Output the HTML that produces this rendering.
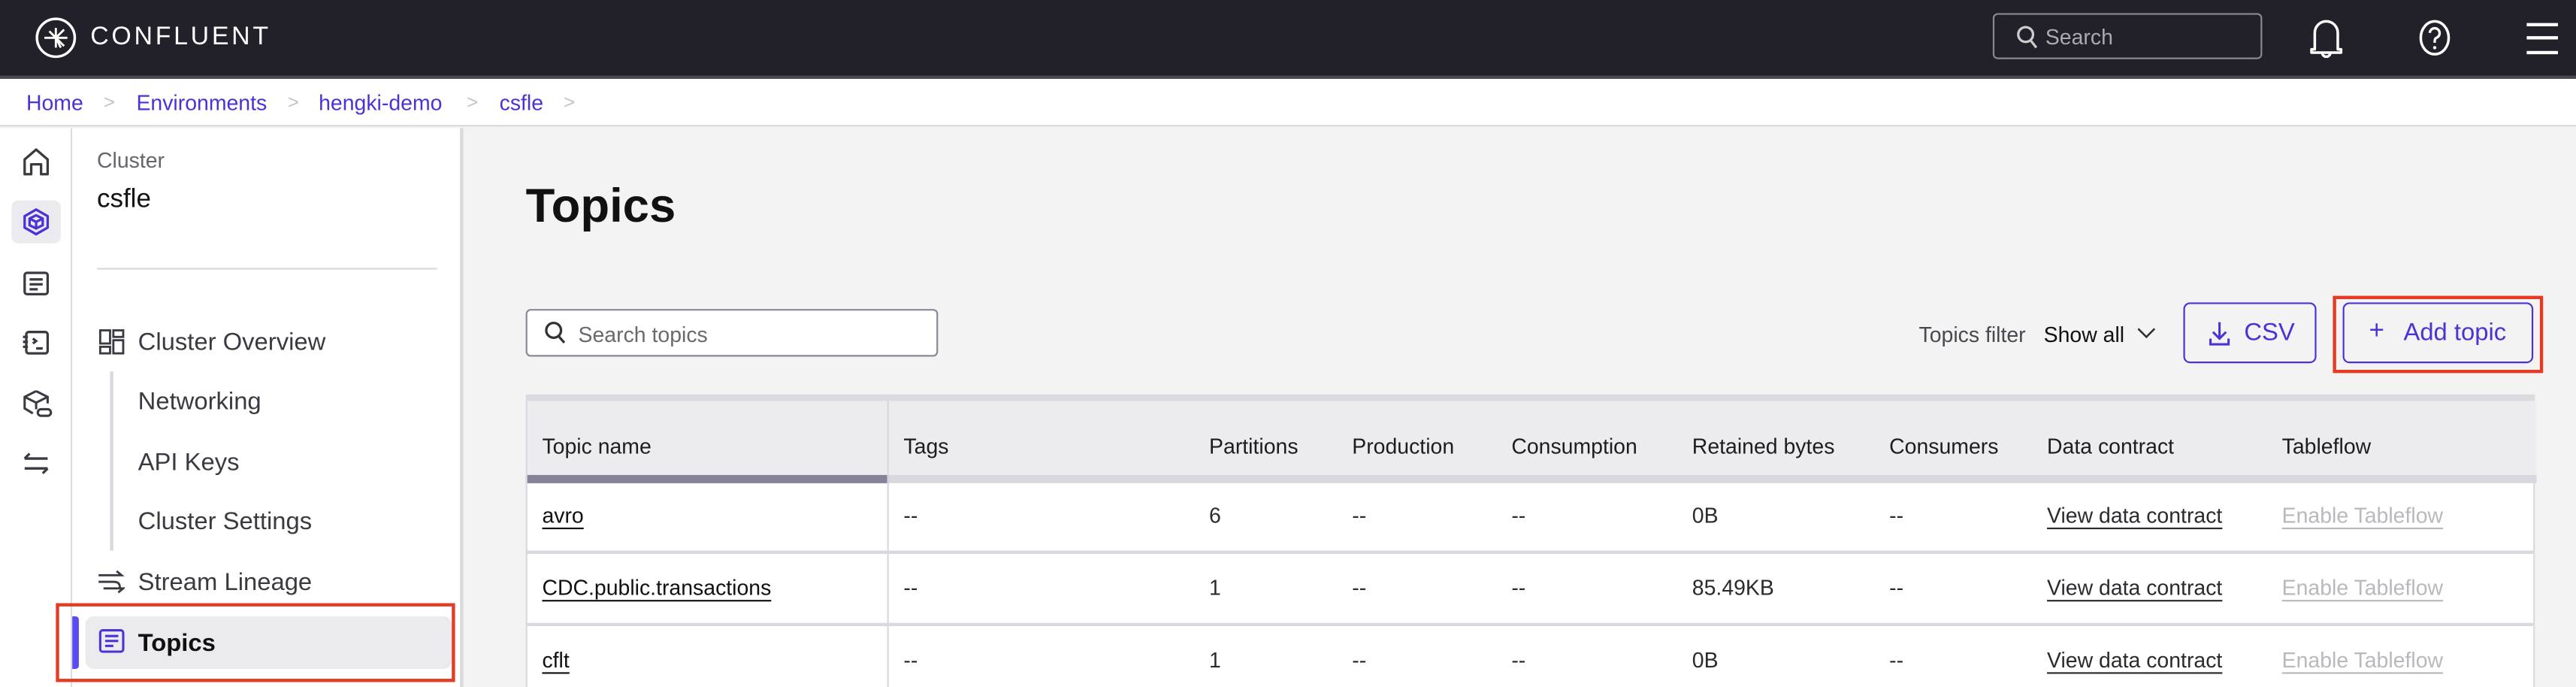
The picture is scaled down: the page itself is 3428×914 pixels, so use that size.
<!DOCTYPE html>
<html><head><meta charset="utf-8"><style>
html,body{margin:0;padding:0;width:3428px;height:914px;overflow:hidden;background:#f3f3f3}
#r{position:absolute;left:0;top:0;width:1568px;height:418px;transform:scale(2.18622,2.18660);transform-origin:0 0;font-family:"Liberation Sans",sans-serif;color:#1d1c22;background:#f3f3f3;overflow:hidden}
.a{position:absolute;white-space:nowrap}
.top{left:0;top:0;width:1568px;height:46px;background:#222129;border-bottom:2px solid #4a4950}
.bc{left:0;top:48px;width:1568px;height:28px;background:#fff;border-bottom:1.5px solid #d9d8de}
.bc span{position:absolute;top:7px;font-size:13px;color:#4933d7}
.bc i{position:absolute;top:7px;font-style:normal;color:#c4c3ca;font-size:12px}
.rail{left:0;top:78px;width:43px;height:340px;background:#fff;border-right:1.5px solid #dcdbe0}
.side{left:44px;top:78px;width:236px;height:340px;background:#fff;border-right:2px solid #d9d8de}
.nav{position:absolute;left:84px;font-size:15px;color:#3b3a42}
.th{position:absolute;top:264px;font-size:13px;color:#1d1c22}
.td{position:absolute;font-size:13px;color:#2b2a30}
.u{text-decoration:underline;text-underline-offset:3px}
.dis{color:#b9b8be;text-decoration:underline;text-underline-offset:3px}
</style></head><body><div id="r">
<div class="a top"></div>
<svg class="a" style="left:21px;top:10px" width="28" height="28" viewBox="0 0 28 28"><circle cx="13" cy="13" r="11.5" fill="none" stroke="#fff" stroke-width="1.6"/><g stroke="#fff" stroke-width="1.3"><line x1="6" y1="13" x2="20" y2="13"/><line x1="13" y1="7" x2="13" y2="19"/><line x1="13" y1="13" x2="18" y2="8"/><line x1="13" y1="13" x2="18" y2="18"/><line x1="13" y1="13" x2="9" y2="9"/><line x1="13" y1="13" x2="16" y2="19"/></g></svg>
<div class="a" style="left:55px;top:14px;font-size:15.5px;letter-spacing:1.7px;color:#fff">CONFLUENT</div>
<div class="a" style="left:1213px;top:8px;width:162px;height:26px;border:1.5px solid #8a8894;border-radius:3px"></div>
<svg class="a" style="left:1227px;top:15px" width="14" height="16" viewBox="0 0 14 16"><circle cx="6" cy="6" r="4.5" fill="none" stroke="#ccc" stroke-width="1.5"/><line x1="9" y1="9.5" x2="12.5" y2="14" stroke="#ccc" stroke-width="1.5"/></svg>
<div class="a" style="left:1245px;top:15px;font-size:13px;color:#aaa9b0">Search</div>
<svg class="a" style="left:1405px;top:11px" width="22" height="26" viewBox="0 0 22 26"><path d="M4 19V9a7 7 0 0 1 14 0v10h2v2H2v-2z" fill="none" stroke="#fff" stroke-width="1.6" stroke-linejoin="round"/><path d="M8.5 21a2.5 2.5 0 0 0 5 0" fill="none" stroke="#fff" stroke-width="1.6"/></svg>
<svg class="a" style="left:1471px;top:11px" width="22" height="24" viewBox="0 0 22 24"><ellipse cx="11" cy="12" rx="8.5" ry="10" fill="none" stroke="#fff" stroke-width="1.6"/><path d="M8 9a3 3 0 1 1 4 3c-1 .5-1 1.5-1 3" fill="none" stroke="#fff" stroke-width="1.5"/><circle cx="11" cy="18" r="1" fill="#fff"/></svg>
<div class="a" style="left:1538px;top:14px;width:19px;height:2px;background:#fff"></div>
<div class="a" style="left:1538px;top:22px;width:19px;height:2px;background:#fff"></div>
<div class="a" style="left:1538px;top:31px;width:19px;height:2px;background:#fff"></div>

<div class="a bc"><span style="left:16px">Home</span><i style="left:63px">&gt;</i><span style="left:83px">Environments</span><i style="left:175px">&gt;</i><span style="left:194px">hengki-demo</span><i style="left:284px">&gt;</i><span style="left:304px">csfle</span><i style="left:343px">&gt;</i></div>

<div class="a rail"></div>
<svg class="a" style="left:12px;top:89px" width="20" height="20" viewBox="0 0 20 20" fill="none" stroke="#3b3a42" stroke-width="1.5"><path d="M3 17V8l7-6 7 6v9h-4v-6H7v6z" stroke-linejoin="round"/></svg>
<div class="a" style="left:7px;top:122px;width:30px;height:26px;background:#ebeaee;border-radius:4px"></div>
<svg class="a" style="left:13px;top:126px" width="18" height="18" viewBox="0 0 18 18" fill="none" stroke="#4933d7" stroke-width="1.5"><path d="M9 1.5l7 4v7l-7 4-7-4v-7z"/><path d="M9 5l4 2v4l-4 2-4-2V7z"/><path d="M5 7l4 2 4-2M9 9v4"/></svg>
<svg class="a" style="left:13px;top:164px" width="18" height="18" viewBox="0 0 18 18" fill="none" stroke="#3b3a42" stroke-width="1.5"><rect x="2" y="2" width="14" height="13" rx="1.5"/><path d="M5 6h8M5 9h8M5 12h5"/></svg>
<svg class="a" style="left:13px;top:200px" width="18" height="18" viewBox="0 0 18 18" fill="none" stroke="#3b3a42" stroke-width="1.5"><rect x="3" y="2" width="13" height="13" rx="1.5"/><path d="M1 5h3M1 8h3M1 11h3M7 6l2 1.5L7 9M9 12h4"/></svg>
<svg class="a" style="left:13px;top:236px" width="20" height="20" viewBox="0 0 20 20" fill="none" stroke="#3b3a42" stroke-width="1.4"><path d="M9 2l7 3.5v4M9 2L2 5.5v7l5 3M2 5.5l7 3.5 7-3.5M9 9v4"/><rect x="10" y="13" width="8" height="4" rx="2"/></svg>
<svg class="a" style="left:13px;top:274px" width="18" height="16" viewBox="0 0 18 16" fill="none" stroke="#3b3a42" stroke-width="1.5"><path d="M2 5h14M2 5l3-3M16 11H2M16 11l-3 3"/></svg>

<div class="a side"></div>
<div class="a" style="left:59px;top:90px;font-size:13px;color:#66656d">Cluster</div>
<div class="a" style="left:59px;top:113px;font-size:16px;color:#111;font-weight:500">csfle</div>
<div class="a" style="left:59px;top:163px;width:207px;height:1px;background:#d9d8de"></div>
<svg class="a" style="left:60px;top:200px" width="16" height="16" viewBox="0 0 16 16" fill="none" stroke="#3b3a42" stroke-width="1.3"><rect x="1" y="1" width="6" height="8"/><rect x="1" y="11" width="6" height="4"/><rect x="9" y="1" width="6" height="4"/><rect x="9" y="7" width="6" height="8"/></svg>
<div class="nav" style="top:200px">Cluster Overview</div>
<div class="a" style="left:67px;top:226px;width:1.5px;height:109px;background:#d9d8de"></div>
<div class="nav" style="top:236px">Networking</div>
<div class="nav" style="top:273px">API Keys</div>
<div class="nav" style="top:309px">Cluster Settings</div>
<svg class="a" style="left:59px;top:346px" width="17" height="16" viewBox="0 0 17 16" fill="none" stroke="#3b3a42" stroke-width="1.3"><path d="M1 4h14l-3-2.5M1 8h9M4 12h12l-3 2.5M10 8c3 0 4 1 4 4"/></svg>
<div class="nav" style="top:346px">Stream Lineage</div>
<div class="a" style="left:44px;top:375px;width:4px;height:32px;background:#5b4cf0;border-radius:0 2px 2px 0"></div>
<div class="a" style="left:52px;top:375px;width:223px;height:32px;background:#ebeaed;border-radius:5px"></div>
<svg class="a" style="left:60px;top:382px" width="16" height="16" viewBox="0 0 16 16" fill="none" stroke="#4933d7" stroke-width="1.4"><rect x="1" y="1.5" width="14" height="13" rx="1.5"/><path d="M4 5h8M4 8h8M4 11h5"/></svg>
<div class="nav" style="top:383px;font-weight:bold;color:#111">Topics</div>
<div class="a" style="left:34px;top:367px;width:239px;height:44px;border:2px solid #e33b24"></div>

<div class="a" style="left:320px;top:110px;font-size:29px;font-weight:bold;color:#111">Topics</div>
<div class="a" style="left:320px;top:188px;width:249px;height:27px;background:#fff;border:1.3px solid #8a8894;border-radius:3px"></div>
<svg class="a" style="left:331px;top:195px" width="14" height="15" viewBox="0 0 14 15"><circle cx="6" cy="6" r="4.5" fill="none" stroke="#333" stroke-width="1.5"/><line x1="9" y1="9.5" x2="12.5" y2="13.5" stroke="#333" stroke-width="1.5"/></svg>
<div class="a" style="left:352px;top:196px;font-size:13px;color:#6a6970">Search topics</div>
<div class="a" style="left:1168px;top:196px;font-size:13px;color:#4a4950">Topics filter</div>
<div class="a" style="left:1244px;top:196px;font-size:13px;color:#111">Show all</div>
<svg class="a" style="left:1300px;top:198px" width="13" height="10" viewBox="0 0 13 10"><path d="M1.5 2l5 5 5-5" fill="none" stroke="#333" stroke-width="1.2"/></svg>
<div class="a" style="left:1329px;top:184px;width:79px;height:35px;border:1.5px solid #4933d7;border-radius:4px"></div>
<svg class="a" style="left:1344px;top:195px" width="14" height="16" viewBox="0 0 14 16" fill="none" stroke="#4933d7" stroke-width="1.4"><path d="M7 1v10M3 7l4 4 4-4M1.5 11v3.5h11V11"/></svg>
<div class="a" style="left:1366px;top:194px;font-size:15px;color:#4933d7">CSV</div>
<div class="a" style="left:1426px;top:184px;width:114px;height:35px;border:1.5px solid #4933d7;border-radius:4px"></div>
<div class="a" style="left:1442px;top:193px;font-size:16px;color:#4933d7">+</div>
<div class="a" style="left:1463px;top:194px;font-size:15px;color:#4933d7">Add topic</div>
<div class="a" style="left:1420px;top:180px;width:124px;height:43px;border:2px solid #e33b24"></div>

<div class="a" style="left:320px;top:240px;width:1222px;height:178px;background:#fff;border-right:1px solid #d9d8de"></div>
<div class="a" style="left:320px;top:240px;width:1222px;height:4px;background:#dadae0"></div>
<div class="a" style="left:320px;top:244px;width:1224px;height:45px;background:#ecebed"></div>
<div class="a" style="left:320px;top:289px;width:1224px;height:5px;background:#d9d8de"></div>
<div class="a" style="left:320px;top:289px;width:221px;height:5px;background:#85829a"></div>
<div class="a" style="left:540px;top:244px;width:1.3px;height:174px;background:#d9d8de"></div>
<div class="a" style="left:320px;top:335px;width:1222px;height:1.5px;background:#d9d8de"></div>
<div class="a" style="left:320px;top:379px;width:1222px;height:1.5px;background:#d9d8de"></div>
<div class="a" style="left:320px;top:244px;width:1px;height:174px;background:#d9d8de"></div>

<div class="th" style="left:330px">Topic name</div><div class="th" style="left:550px">Tags</div><div class="th" style="left:736px">Partitions</div><div class="th" style="left:823px">Production</div><div class="th" style="left:920px">Consumption</div><div class="th" style="left:1030px">Retained bytes</div><div class="th" style="left:1150px">Consumers</div><div class="th" style="left:1246px">Data contract</div><div class="th" style="left:1389px">Tableflow</div>

<div class="td u" style="left:330px;top:306px;font-weight:500;color:#111">avro</div><div class="td" style="left:550px;top:306px">--</div><div class="td" style="left:736px;top:306px">6</div><div class="td" style="left:823px;top:306px">--</div><div class="td" style="left:920px;top:306px">--</div><div class="td" style="left:1030px;top:306px">0B</div><div class="td" style="left:1150px;top:306px">--</div><div class="td u" style="left:1246px;top:306px">View data contract</div><div class="td dis" style="left:1389px;top:306px">Enable Tableflow</div>

<div class="td u" style="left:330px;top:350px;font-weight:500;color:#111">CDC.public.transactions</div><div class="td" style="left:550px;top:350px">--</div><div class="td" style="left:736px;top:350px">1</div><div class="td" style="left:823px;top:350px">--</div><div class="td" style="left:920px;top:350px">--</div><div class="td" style="left:1030px;top:350px">85.49KB</div><div class="td" style="left:1150px;top:350px">--</div><div class="td u" style="left:1246px;top:350px">View data contract</div><div class="td dis" style="left:1389px;top:350px">Enable Tableflow</div>

<div class="td u" style="left:330px;top:394px;font-weight:500;color:#111">cflt</div><div class="td" style="left:550px;top:394px">--</div><div class="td" style="left:736px;top:394px">1</div><div class="td" style="left:823px;top:394px">--</div><div class="td" style="left:920px;top:394px">--</div><div class="td" style="left:1030px;top:394px">0B</div><div class="td" style="left:1150px;top:394px">--</div><div class="td u" style="left:1246px;top:394px">View data contract</div><div class="td dis" style="left:1389px;top:394px">Enable Tableflow</div>
</div></body></html>
